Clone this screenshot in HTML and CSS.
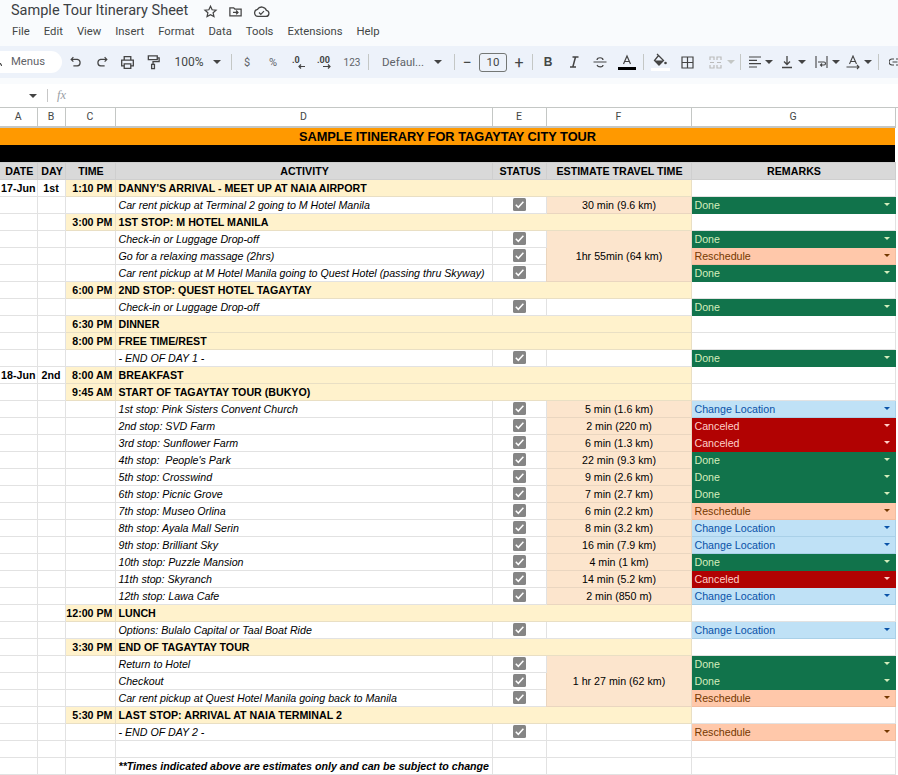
FILE: index.html
```html
<!DOCTYPE html>
<html lang="en">
<head>
<meta charset="utf-8">
<title>Sample Tour Itinerary Sheet</title>
<link rel="stylesheet" href="styles.css">
</head>
<body>
<svg class="defs" width="0" height="0" aria-hidden="true">
  <symbol id="chk" viewBox="0 0 13 13">
    <rect x="0" y="0" width="13" height="13" rx="1.5" fill="#858585"/>
    <path d="M2.800 6.800 5.300 9.300 10.400 3.800" fill="none" stroke="#fff" stroke-width="1.500"/>
  </symbol>
</svg>
<header class="top">
  <div class="title-row">
    <span class="doc-title">Sample Tour Itinerary Sheet</span>
    <svg class="ti" width="15" height="15" viewBox="0 0 24 24"><path d="M12 3.500l2.600 5.700 6.200.7-4.600 4.200 1.300 6.100L12 17.100l-5.500 3.100 1.300-6.100-4.600-4.200 6.200-.7z" fill="none" stroke="#444" stroke-width="2"/></svg>
    <svg class="ti" width="15" height="15" viewBox="0 0 24 24"><path d="M3 6h6l2 2h10v11H3zM8 13.500h8M13 10.500l3 3-3 3" fill="none" stroke="#444" stroke-width="2"/></svg>
    <svg class="ti" width="17" height="15" viewBox="0 0 24 20"><path d="M7 17a5 5 0 0 1-.7-9.900A7 7 0 0 1 19 8.500a4.300 4.300 0 0 1-.5 8.500zM8.500 11.500l2.500 2.500 4.500-4.500" fill="none" stroke="#444" stroke-width="1.800"/></svg>
  </div>
  <nav class="menu">
    <span>File</span><span>Edit</span><span>View</span><span>Insert</span><span>Format</span><span>Data</span><span>Tools</span><span>Extensions</span><span>Help</span>
  </nav>
</header>
<div class="toolbar">
  <div class="pill"><svg class="lens" width="2" height="3" viewBox="0 0 2 3"><path d="M0 0 2 3" stroke="#444" stroke-width="1.200"/></svg><span>Menus</span></div>
  <span class="b w26 ml1"><svg width="14" height="14" viewBox="0 0 16 16"><path d="M5 2.500 2.500 5 5 7.500M3 5h6.500a3.800 3.800 0 0 1 0 7.500H5" fill="none" stroke="#444" stroke-width="1.400"/></svg></span>
  <span class="b w25"><svg width="14" height="14" viewBox="0 0 16 16"><path d="M11 2.500 13.500 5 11 7.500M13 5H6.500a3.800 3.800 0 0 0 0 7.500H11" fill="none" stroke="#444" stroke-width="1.400"/></svg></span>
  <span class="b w26"><svg width="15" height="15" viewBox="0 0 16 16"><path d="M4.500 5V1.800h7V5M4.500 11.500H1.800V5.500h12.400v6h-2.700M4.500 9.500h7v4.700h-7z" fill="none" stroke="#444" stroke-width="1.400"/></svg></span>
  <span class="b w26"><svg width="15" height="16" viewBox="0 0 16 16"><path d="M2.500 1.500h9.500v4H2.500zM12 3.500h2v4H7.500v3M6 10.500h3v4.500H6z" fill="none" stroke="#444" stroke-width="1.400"/></svg></span>
  <span class="b zoom">100%</span>
  <span class="b w14"><i class="caret"></i></span>
  <i class="sep s1"></i>
  <span class="b w26 glyph">$</span>
  <span class="b w26 glyph">%</span>
  <span class="b w26"><svg width="16" height="16" viewBox="0 0 16 16"><text x="1" y="9" class="svt">.0</text><path d="M14 12.500H8M10 10.500l-2 2 2 2" fill="none" stroke="#444" stroke-width="1.200"/></svg></span>
  <span class="b w28"><svg width="20" height="16" viewBox="0 0 20 16"><text x="1" y="9" class="svt">.00</text><path d="M7 12.500h7M12 10.500l2 2-2 2" fill="none" stroke="#444" stroke-width="1.200"/></svg></span>
  <span class="b w24 n123">123</span>
  <i class="sep s7"></i>
  <span class="b font">Defaul...</span>
  <span class="b w14"><i class="caret"></i></span>
  <i class="sep s2"></i>
  <span class="b w24 sym">&minus;</span>
  <span class="size">10</span>
  <span class="b w24 sym">+</span>
  <i class="sep s3"></i>
  <span class="b w26 bold">B</span>
  <span class="b w26"><svg width="14" height="14" viewBox="0 0 14 14"><path d="M5.500 2h6M3 12h6M8.500 2 5.800 12" fill="none" stroke="#444" stroke-width="1.500"/></svg></span>
  <span class="b w26"><svg width="14" height="14" viewBox="0 0 14 14"><path d="M0.500 7h13M4 5c0-3 6-3 6 0M4 10c1 2.500 6 2.500 6 0" fill="none" stroke="#444" stroke-width="1.200"/></svg></span>
  <span class="b w28"><svg width="18" height="18" viewBox="0 0 18 18"><path d="M5.500 11 9 3l3.500 8M6.800 8.500h4.400" fill="none" stroke="#444" stroke-width="1.200"/><rect y="14" width="18" height="3" fill="#000"/></svg></span>
  <i class="sep s4"></i>
  <span class="b w32"><svg width="19" height="19" viewBox="0 0 19 19"><path d="M6 1l1.500 1.500M7.500 2.500 12.500 7.500 8 12 3.500 7.500z" fill="none" stroke="#444" stroke-width="1.300"/><path d="M3.500 7.500h9L8 12z" fill="#444"/><circle cx="14.500" cy="10" r="1.300" fill="#444"/><rect y="15" width="19" height="3" fill="#fff"/></svg></span>
  <span class="b w22"><svg width="13" height="13" viewBox="0 0 13 13"><path d="M1 1h11v11H1zM6.500 1v11M1 6.500h11" fill="none" stroke="#444" stroke-width="1.200"/></svg></span>
  <span class="b w24 ml5"><svg width="13" height="13" viewBox="0 0 13 13"><path d="M1 4V1h4v3M8 4V1h4v3M1 9v3h4V9M8 9v3h4V9M1 6.500h4M8 6.500h4" fill="none" stroke="#bbb" stroke-width="1.200"/></svg></span>
  <span class="b w8"><i class="caret off"></i></span>
  <i class="sep s5"></i>
  <span class="b w20 ml4"><svg width="12" height="12" viewBox="0 0 12 12"><path d="M0 1h12M0 4.300h8M0 7.700h12M0 11h8" stroke="#444" stroke-width="1.200"/></svg></span>
  <span class="b w8"><i class="caret"></i></span>
  <span class="b w22 ml3"><svg width="12" height="14" viewBox="0 0 12 14"><path d="M6 1v8M3 6.500 6 9.500l3-3M1 12.500h10" fill="none" stroke="#444" stroke-width="1.300"/></svg></span>
  <span class="b w8"><i class="caret"></i></span>
  <span class="b w22 ml4"><svg width="13" height="12" viewBox="0 0 13 12"><path d="M1 0v12M12 0v12M3 6h6a1.500 1.500 0 0 1 0 3H6M7 7.500 5.500 9 7 10.500" fill="none" stroke="#444" stroke-width="1.100"/></svg></span>
  <span class="b w8"><i class="caret"></i></span>
  <span class="b w22 ml2"><svg width="14" height="15" viewBox="0 0 14 15"><path d="M3.500 9 7 1l3.500 8M4.800 6.500h4.400M0.500 12h12M11 10l2 2-2 2" fill="none" stroke="#444" stroke-width="1.100"/></svg></span>
  <span class="b w8"><i class="caret"></i></span>
  <i class="sep s6"></i>
  <span class="b w22 ml5"><svg width="12" height="8" viewBox="0 0 12 8"><path d="M5 1H3a3 3 0 0 0 0 6h2M7 1h2a3 3 0 0 1 0 6H7M3.500 4h5" fill="none" stroke="#444" stroke-width="1.200"/></svg></span>
</div>
<div class="gap"></div>
<div class="formula">
  <i class="caret dark"></i>
  <i class="fsep"></i>
  <span class="fx">fx</span>
</div>
<table class="sheet">
  <colgroup><col class="ca"><col class="cb"><col class="cc"><col class="cd"><col class="ce"><col class="cf"><col class="cg"></colgroup>
  <thead>
    <tr class="letters"><th>A</th><th>B</th><th>C</th><th>D</th><th>E</th><th>F</th><th>G</th></tr>
  </thead>
  <tbody>
    <tr class="banner"><td colspan="7">SAMPLE ITINERARY FOR TAGAYTAY CITY TOUR</td></tr>
    <tr class="blackbar"><td colspan="7"></td></tr>
    <tr class="heads"><td>DATE</td><td>DAY</td><td>TIME</td><td>ACTIVITY</td><td>STATUS</td><td>ESTIMATE TRAVEL TIME</td><td>REMARKS</td></tr>
    <tr><td class="dd">17-Jun</td><td class="dd">1st</td><td class="tm">1:10 PM</td><td class="hd" colspan="3">DANNY'S ARRIVAL - MEET UP AT NAIA AIRPORT</td><td></td></tr>
    <tr><td></td><td></td><td></td><td class="act">Car rent pickup at Terminal 2 going to M Hotel Manila</td><td class="st"><svg class="cb-i"><use href="#chk"/></svg></td><td class="tr">30 min (9.6 km)</td><td class="chip done"><div>Done<i></i></div></td></tr>
    <tr><td></td><td></td><td class="tm">3:00 PM</td><td class="hd" colspan="3">1ST STOP: M HOTEL MANILA</td><td></td></tr>
    <tr><td></td><td></td><td></td><td class="act">Check-in or Luggage Drop-off</td><td class="st"><svg class="cb-i"><use href="#chk"/></svg></td><td class="tr" rowspan="3">1hr 55min (64 km)</td><td class="chip done"><div>Done<i></i></div></td></tr>
    <tr><td></td><td></td><td></td><td class="act">Go for a relaxing massage (2hrs)</td><td class="st"><svg class="cb-i"><use href="#chk"/></svg></td><td class="chip resch"><div>Reschedule<i></i></div></td></tr>
    <tr><td></td><td></td><td></td><td class="act">Car rent pickup at M Hotel Manila going to Quest Hotel (passing thru Skyway)</td><td class="st"><svg class="cb-i"><use href="#chk"/></svg></td><td class="chip done"><div>Done<i></i></div></td></tr>
    <tr><td></td><td></td><td class="tm">6:00 PM</td><td class="hd" colspan="3">2ND STOP: QUEST HOTEL TAGAYTAY</td><td></td></tr>
    <tr><td></td><td></td><td></td><td class="act">Check-in or Luggage Drop-off</td><td class="st"><svg class="cb-i"><use href="#chk"/></svg></td><td></td><td class="chip done"><div>Done<i></i></div></td></tr>
    <tr><td></td><td></td><td class="tm">6:30 PM</td><td class="hd" colspan="3">DINNER</td><td></td></tr>
    <tr><td></td><td></td><td class="tm">8:00 PM</td><td class="hd" colspan="3">FREE TIME/REST</td><td></td></tr>
    <tr><td></td><td></td><td></td><td class="act">- END OF DAY 1 -</td><td class="st"><svg class="cb-i"><use href="#chk"/></svg></td><td></td><td class="chip done"><div>Done<i></i></div></td></tr>
    <tr><td class="dd">18-Jun</td><td class="dd">2nd</td><td class="tm">8:00 AM</td><td class="hd" colspan="3">BREAKFAST</td><td></td></tr>
    <tr><td></td><td></td><td class="tm">9:45 AM</td><td class="hd" colspan="3">START OF TAGAYTAY TOUR (BUKYO)</td><td></td></tr>
    <tr><td></td><td></td><td></td><td class="act">1st stop: Pink Sisters Convent Church</td><td class="st"><svg class="cb-i"><use href="#chk"/></svg></td><td class="tr">5 min (1.6 km)</td><td class="chip loc"><div>Change Location<i></i></div></td></tr>
    <tr><td></td><td></td><td></td><td class="act">2nd stop: SVD Farm</td><td class="st"><svg class="cb-i"><use href="#chk"/></svg></td><td class="tr">2 min (220 m)</td><td class="chip cancel"><div>Canceled<i></i></div></td></tr>
    <tr><td></td><td></td><td></td><td class="act">3rd stop: Sunflower Farm</td><td class="st"><svg class="cb-i"><use href="#chk"/></svg></td><td class="tr">6 min (1.3 km)</td><td class="chip cancel"><div>Canceled<i></i></div></td></tr>
    <tr><td></td><td></td><td></td><td class="act">4th stop: &nbsp;People's Park</td><td class="st"><svg class="cb-i"><use href="#chk"/></svg></td><td class="tr">22 min (9.3 km)</td><td class="chip done"><div>Done<i></i></div></td></tr>
    <tr><td></td><td></td><td></td><td class="act">5th stop: Crosswind</td><td class="st"><svg class="cb-i"><use href="#chk"/></svg></td><td class="tr">9 min (2.6 km)</td><td class="chip done"><div>Done<i></i></div></td></tr>
    <tr><td></td><td></td><td></td><td class="act">6th stop: Picnic Grove</td><td class="st"><svg class="cb-i"><use href="#chk"/></svg></td><td class="tr">7 min (2.7 km)</td><td class="chip done"><div>Done<i></i></div></td></tr>
    <tr><td></td><td></td><td></td><td class="act">7th stop: Museo Orlina</td><td class="st"><svg class="cb-i"><use href="#chk"/></svg></td><td class="tr">6 min (2.2 km)</td><td class="chip resch"><div>Reschedule<i></i></div></td></tr>
    <tr><td></td><td></td><td></td><td class="act">8th stop: Ayala Mall Serin</td><td class="st"><svg class="cb-i"><use href="#chk"/></svg></td><td class="tr">8 min (3.2 km)</td><td class="chip loc"><div>Change Location<i></i></div></td></tr>
    <tr><td></td><td></td><td></td><td class="act">9th stop: Brilliant Sky</td><td class="st"><svg class="cb-i"><use href="#chk"/></svg></td><td class="tr">16 min (7.9 km)</td><td class="chip loc"><div>Change Location<i></i></div></td></tr>
    <tr><td></td><td></td><td></td><td class="act">10th stop: Puzzle Mansion</td><td class="st"><svg class="cb-i"><use href="#chk"/></svg></td><td class="tr">4 min (1 km)</td><td class="chip done"><div>Done<i></i></div></td></tr>
    <tr><td></td><td></td><td></td><td class="act">11th stop: Skyranch</td><td class="st"><svg class="cb-i"><use href="#chk"/></svg></td><td class="tr">14 min (5.2 km)</td><td class="chip cancel"><div>Canceled<i></i></div></td></tr>
    <tr><td></td><td></td><td></td><td class="act">12th stop: Lawa Cafe</td><td class="st"><svg class="cb-i"><use href="#chk"/></svg></td><td class="tr">2 min (850 m)</td><td class="chip loc"><div>Change Location<i></i></div></td></tr>
    <tr><td></td><td></td><td class="tm">12:00 PM</td><td class="hd" colspan="3">LUNCH</td><td></td></tr>
    <tr><td></td><td></td><td></td><td class="act">Options: Bulalo Capital or Taal Boat Ride</td><td class="st"><svg class="cb-i"><use href="#chk"/></svg></td><td></td><td class="chip loc"><div>Change Location<i></i></div></td></tr>
    <tr><td></td><td></td><td class="tm">3:30 PM</td><td class="hd" colspan="3">END OF TAGAYTAY TOUR</td><td></td></tr>
    <tr><td></td><td></td><td></td><td class="act">Return to Hotel</td><td class="st"><svg class="cb-i"><use href="#chk"/></svg></td><td class="tr" rowspan="3">1 hr 27 min (62 km)</td><td class="chip done"><div>Done<i></i></div></td></tr>
    <tr><td></td><td></td><td></td><td class="act">Checkout</td><td class="st"><svg class="cb-i"><use href="#chk"/></svg></td><td class="chip done"><div>Done<i></i></div></td></tr>
    <tr><td></td><td></td><td></td><td class="act">Car rent pickup at Quest Hotel Manila going back to Manila</td><td class="st"><svg class="cb-i"><use href="#chk"/></svg></td><td class="chip resch"><div>Reschedule<i></i></div></td></tr>
    <tr><td></td><td></td><td class="tm">5:30 PM</td><td class="hd" colspan="3">LAST STOP: ARRIVAL AT NAIA TERMINAL 2</td><td></td></tr>
    <tr><td></td><td></td><td></td><td class="act">- END OF DAY 2 -</td><td class="st"><svg class="cb-i"><use href="#chk"/></svg></td><td></td><td class="chip resch"><div>Reschedule<i></i></div></td></tr>
    <tr><td></td><td></td><td></td><td></td><td></td><td></td><td></td></tr>
    <tr><td></td><td></td><td></td><td class="note">**Times indicated above are estimates only and can be subject to change</td><td></td><td></td><td></td></tr>
  </tbody>
</table>
</body>
</html>
```

FILE: styles.css
```css
html, body {
  margin: 0;
  padding: 0;
  height: 775px;
  overflow: hidden;
  background: #fff;
}
body {
  font-family: "Liberation Sans", Arial, sans-serif;
  color: #000;
}
.defs { position: absolute; }

/* title + menus */
.top {
  height: 46px;
  background: #f9fbfd;
  box-sizing: border-box;
  padding: 1px 0 0 11px;
}
.title-row {
  display: flex;
  align-items: center;
  height: 20px;
}
.doc-title {
  font: 14.500px/20px Roboto, sans-serif;
  color: #3c4043;
  width: 192px;
  white-space: nowrap;
}
.ti { margin-right: 10px; flex: none; }
.menu {
  display: flex;
  gap: 14px;
  padding: 2px 0 0 1px;
  font: 11.300px/18px Roboto, sans-serif;
  color: #444746;
}

/* toolbar */
.toolbar {
  display: flex;
  align-items: center;
  height: 32px;
  background: #edf2fa;
  overflow: hidden;
  color: #444746;
  font-family: Roboto, sans-serif;
}
.pill {
  display: flex;
  align-items: center;
  width: 62px;
  height: 22px;
  flex: none;
  box-sizing: border-box;
  padding-bottom: 2px;
  background: #fff;
  border-radius: 0 11px 11px 0;
  font-size: 11.300px;
  color: #5f6368;
}
.lens { margin: 6px 9px 0 0; flex: none; }
.b {
  display: flex;
  align-items: center;
  justify-content: center;
  flex: none;
  height: 24px;
}
.ml1 { margin-left: 1px; }
.ml2 { margin-left: 2px; }
.ml3 { margin-left: 3px; }
.ml4 { margin-left: 4px; }
.ml5 { margin-left: 5px; }
.w8 { width: 8px; }
.w14 { width: 14px; }
.w20 { width: 20px; }
.w22 { width: 22px; }
.w24 { width: 24px; }
.w25 { width: 25px; }
.w26 { width: 26px; }
.w28 { width: 28px; }
.w32 { width: 32px; }
.zoom { width: 42px; margin-left: 2px; font-size: 12px; }
.glyph { font-size: 11px; color: #5f6368; }
.n123 { font-size: 10px; color: #5f6368; }
.font { width: 49px; margin-left: 7px; font-size: 11.500px; color: #5f6368; justify-content: flex-start; }
.sym { font-size: 16px; }
.bold { font: bold 12px "Liberation Sans", sans-serif; }
.svt { font: bold 9px Roboto, sans-serif; fill: #444; }
.size {
  width: 28px;
  height: 19px;
  box-sizing: border-box;
  flex: none;
  border: 1px solid #747775;
  border-radius: 3px;
  text-align: center;
  font-size: 11.500px;
  line-height: 17px;
}
.sep {
  width: 1px;
  height: 16px;
  background: #c4c7c5;
  flex: none;
}
.s1 { margin: 0 2px 0 7px; }
.s7 { margin: 0 6px 0 4px; }
.s2 { margin: 0 0 0 9px; }
.s3 { margin: 0 2px 0 1px; }
.s4 { margin: 0 0 0 2px; }
.s5 { margin: 0 0 0 5px; }
.s6 { margin: 0 0 0 6px; }
.caret {
  display: block;
  width: 0;
  height: 0;
  border-left: 4px solid transparent;
  border-right: 4px solid transparent;
  border-top: 4px solid #444;
}
.caret.off { border-top-color: #c4c7c5; }
.caret.dark { margin-left: 29px; }

.gap { height: 6px; background: #f9fbfd; }
.formula {
  display: flex;
  align-items: center;
  height: 23px;
  border-bottom: 1px solid #c4c7c5;
  box-sizing: content-box;
  background: #fff;
}
.fsep {
  width: 1px;
  height: 13px;
  margin-left: 10px;
  background: #c7c7c7;
}
.fx {
  margin-left: 9px;
  font: italic 12.500px "Liberation Serif", serif;
  color: #9aa0a6;
}

/* sheet */
.sheet {
  table-layout: fixed;
  width: 895px;
  border-collapse: collapse;
  font-size: 10.670px;
  line-height: 14px;
}
.ca { width: 37px; }
.cb { width: 28px; }
.cc { width: 50px; }
.cd { width: 377px; }
.ce { width: 54px; }
.cf { width: 145px; }
.cg { width: 204px; }
.sheet td, .sheet th {
  height: 17px;
  padding: 0;
  box-sizing: border-box;
  border: 1px solid #e2e2e2;
  white-space: nowrap;
  overflow: hidden;
}
.sheet td:first-child, .sheet th:first-child { border-left: 0; }
.letters th {
  height: 19px;
  font: 400 10.500px/14px Roboto, sans-serif;
  color: #444746;
  background: #fff;
  border: 1px solid #c4c7c5;
  border-bottom: 2px solid #c4c7c5;
  border-top: 0;
}
.banner td {
  height: 18px;
  background: #ff9900;
  border: 0;
  text-align: center;
  font-weight: bold;
  font-size: 12.800px;
}
.blackbar td { height: 17px; background: #000; border: 0; }
.heads td {
  background: #d9d9d9;
  text-align: center;
  font-weight: bold;
  border-color: #cfcfcf;
  padding-left: 2px;
}
.dd { text-align: center; font-weight: bold; }
.tm {
  background: #fff2cc;
  border-color: #e9dfc4 !important;
  text-align: right;
  padding-right: 2px !important;
  font-weight: bold;
}
.hd {
  background: #fff2cc;
  border-color: #e9dfc4 !important;
  padding-left: 3px !important;
  font-weight: bold;
}
.act { font-style: italic; padding-left: 3px !important; }
.note { font-style: italic; font-weight: bold; padding-left: 3px !important; }
.st { text-align: center; vertical-align: middle; }
.cb-i { display: block; width: 13px; height: 13px; margin: 0 auto; }
.tr {
  background: #fce5cd;
  border-color: #ead6c0 !important;
  text-align: center;
  padding-left: 1px !important;
}
.chip { padding: 0 !important; }
.chip div {
  display: flex;
  align-items: center;
  justify-content: space-between;
  height: 16px;
  padding: 0 5px 0 3px;
}
.chip i {
  display: block;
  width: 0;
  height: 0;
  border-left: 3.500px solid transparent;
  border-right: 3.500px solid transparent;
  border-top: 3.500px solid currentColor;
}
.done { background: #11734b; border-color: #11734b !important; color: #d4edbc; }
.resch { background: #ffc8aa; border-color: #f2bda0 !important; color: #753800; }
.loc { background: #bfe1f6; border-color: #a9d0e8 !important; color: #0a53a8; }
.cancel { background: #b10202; border-color: #b10202 !important; color: #ffcfc9; }
```
